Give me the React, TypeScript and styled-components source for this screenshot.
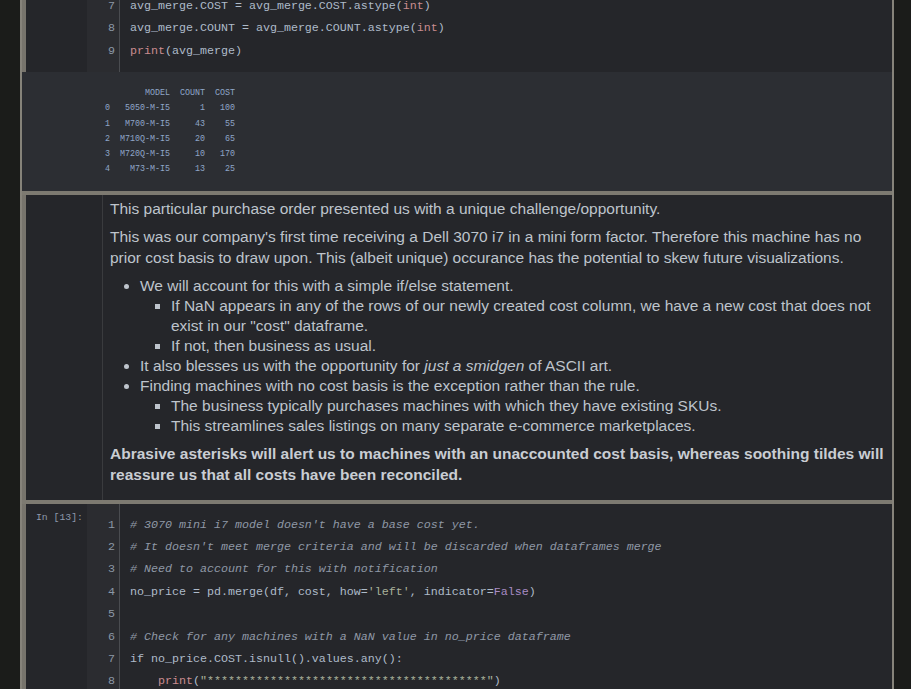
import styled, { createGlobalStyle } from "styled-components";

type Tok = [string, string];

const firstCell: [number, Tok[]][] = [
	[7, [["", "avg_merge.COST = avg_merge.COST.astype("], ["builtin", "int"], ["", ")"]]],
	[8, [["", "avg_merge.COUNT = avg_merge.COUNT.astype("], ["builtin", "int"], ["", ")"]]],
	[9, [["builtin", "print"], ["", "(avg_merge)"]]],
];

const stars = "*".repeat(40);

const secondCell: [number, Tok[]][] = [
	[1, [["comment", "# 3070 mini i7 model doesn't have a base cost yet."]]],
	[2, [["comment", "# It doesn't meet merge criteria and will be discarded when dataframes merge"]]],
	[3, [["comment", "# Need to account for this with notification"]]],
	[4, [["", "no_price = pd.merge(df, cost, how="], ["string", "'left'"], ["", ", indicator="], ["kw", "False"], ["", ")"]]],
	[5, []],
	[6, [["comment", "# Check for any machines with a NaN value in no_price dataframe"]]],
	[7, [["", "if no_price.COST.isnull().values.any():"]]],
	[8, [["", "    "], ["builtin", "print"], ["", "("], ["string", `"${stars}"`], ["", ")"]]],
];

const frame = `        MODEL  COUNT  COST
0   5050-M-I5      1   100
1   M700-M-I5     43    55
2  M710Q-M-I5     20    65
3  M720Q-M-I5     10   170
4    M73-M-I5     13    25`;

const GlobalStyle = createGlobalStyle`
	html, body {
		margin: 0;
		background: #1b1c1a;
		overflow: hidden;
	}
`;

const Notebook = styled.div`
	margin-left: 20px;
	margin-top: -15px;
	width: 870px;
	border-left: 2px solid #86837a;
	border-right: 2px solid #86837a;
`;

const Cell = styled.div<{ $first?: boolean }>`
	border-top: ${(p) => (p.$first ? "0" : "4px solid #7d7a71")};
	background: #25262a;
`;

const InputRow = styled.div`
	display: flex;
	border-left: 4px solid #77746c;
`;

const Prompt = styled.div`
	width: 61px;
	flex-shrink: 0;
	display: flex;
	justify-content: flex-end;
	align-items: flex-start;
`;

const PromptLabel = styled.div`
	font-family: "Liberation Mono", monospace;
	font-size: 9.8px;
	line-height: 12px;
	color: #8e99aa;
	padding: 8px 4px 2px 0;
	border-right: 1px solid #3d4c60;
	margin-right: -1px;
`;

const Gutter = styled.div`
	width: 32px;
	flex-shrink: 0;
	background: #2b2c30;
	border-right: 1px solid #4a4c50;
	padding: 10px 0;
`;

const LineNo = styled.div`
	font-family: "Liberation Mono", monospace;
	font-size: 11.67px;
	line-height: 22.4px;
	height: 22.4px;
	color: #8c98a6;
	text-align: right;
	padding-right: 4px;
`;

const Code = styled.div`
	flex: 1;
	padding: 10px 10px;
`;

const CodeLine = styled.div`
	font-family: "Liberation Mono", monospace;
	font-size: 11.67px;
	line-height: 22.4px;
	height: 22.4px;
	white-space: pre;
	color: #aebbc9;
`;

const Token = styled.span<{ $kind: string }>`
	color: ${(p) =>
		p.$kind === "builtin" ? "#c98c8f"
		: p.$kind === "comment" ? "#8f98a6"
		: p.$kind === "string" ? "#a9b19a"
		: p.$kind === "kw" ? "#a98cc4"
		: "inherit"};
	font-style: ${(p) => (p.$kind === "comment" ? "italic" : "normal")};
`;

const OutputArea = styled.div`
	background: #2c2e33;
	padding: 14px 0 14px 83px;
`;

const OutputPre = styled.pre`
	margin: 0;
	font-family: "Liberation Mono", monospace;
	font-size: 8.33px;
	line-height: 15.2px;
	color: #8fa6c8;
`;

const MdPrompt = styled.div`
	width: 76px;
	flex-shrink: 0;
	border-right: 1px solid #3a3b3e;
`;

const MdBody = styled.div`
	flex: 1;
	padding: 4px 4px 7px 7px;
	font-family: "Liberation Sans", Arial, sans-serif;
	font-size: 15.5px;
	line-height: 20.1px;
	color: #bec4cc;

	p {
		margin: 0 0 8px;
	}

	strong {
		color: #c9cdd3;
	}
`;

const List = styled.ul<{ $nested?: boolean }>`
	margin: ${(p) => (p.$nested ? "0" : "0 0 8px")};
	padding-left: ${(p) => (p.$nested ? "31px" : "30px")};
	list-style-type: ${(p) => (p.$nested ? "square" : "disc")};
`;

const Editor = ({ lines, label }: { lines: [number, Tok[]][]; label?: string }) => (
	<InputRow>
		<Prompt>{label && <PromptLabel>{label}</PromptLabel>}</Prompt>
		<Gutter>
			{lines.map(([n]) => (
				<LineNo key={n}>{n}</LineNo>
			))}
		</Gutter>
		<Code>
			{lines.map(([n, toks]) => (
				<CodeLine key={n}>
					{toks.map(([k, t], i) => (
						<Token key={i} $kind={k}>{t}</Token>
					))}
				</CodeLine>
			))}
		</Code>
	</InputRow>
);

export default function App() {
	return (
		<>
			<GlobalStyle />
			<Notebook>
				<Cell $first>
					<Editor lines={firstCell} />
					<OutputArea>
						<OutputPre>{frame}</OutputPre>
					</OutputArea>
				</Cell>

				<Cell>
					<InputRow>
						<MdPrompt />
						<MdBody>
							<p>This particular purchase order presented us with a unique challenge/opportunity.</p>
							<p>
								This was our company's first time receiving a Dell 3070 i7 in a mini form factor. Therefore this machine has no
								prior cost basis to draw upon. This (albeit unique) occurance has the potential to skew future visualizations.
							</p>
							<List>
								<li>
									We will account for this with a simple if/else statement.
									<List $nested>
										<li>If NaN appears in any of the rows of our newly created cost column, we have a new cost that does not exist in our "cost" dataframe.</li>
										<li>If not, then business as usual.</li>
									</List>
								</li>
								<li>It also blesses us with the opportunity for <em>just a smidgen</em> of ASCII art.</li>
								<li>
									Finding machines with no cost basis is the exception rather than the rule.
									<List $nested>
										<li>The business typically purchases machines with which they have existing SKUs.</li>
										<li>This streamlines sales listings on many separate e-commerce marketplaces.</li>
									</List>
								</li>
							</List>
							<p>
								<strong>
									Abrasive asterisks will alert us to machines with an unaccounted cost basis, whereas soothing tildes will reassure us that all costs have been reconciled.
								</strong>
							</p>
						</MdBody>
					</InputRow>
				</Cell>

				<Cell>
					<Editor lines={secondCell} label="In [13]:" />
				</Cell>
			</Notebook>
		</>
	);
}
